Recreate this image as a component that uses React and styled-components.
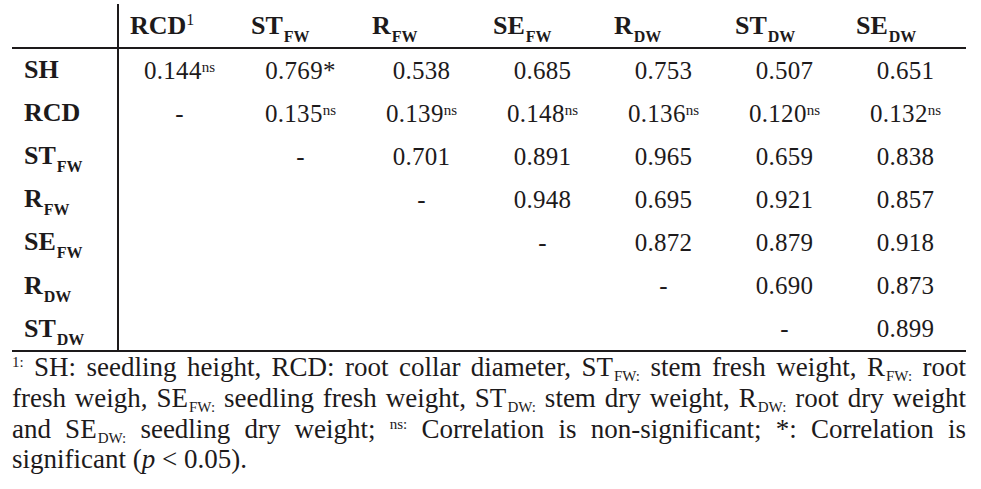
import styled, { createGlobalStyle } from 'styled-components';

const serif = '"Liberation Serif", "Times New Roman", serif';
const ink = '#1d1a1b';

const GlobalStyle = createGlobalStyle`
    body {
        margin: 0;
        background: #fff;
        color: ${ink};
        font-family: ${serif};
    }
`;

const Page = styled.div`
    width: 954px;
    padding: 4px 15px 0 12px;
    font-family: ${serif};
`;

const Grid = styled.div`
    display: grid;
    grid-template-columns: 107px repeat(7, 121px);
    border-bottom: 2.5px solid ${ink};
`;

const HeadCell = styled.div`
    height: 44.5px;
    display: flex;
    align-items: flex-end;
    padding: 0 0 8px 11px;
    box-sizing: border-box;
    font-family: ${serif};
    font-weight: 700;
    font-size: 26px;
    line-height: 26px;
    border-bottom: 2.5px solid ${ink};
    border-right: ${props => props.first ? `2.5px solid ${ink}` : 'none'};
`;

const LabelCell = styled.div`
    height: 43.1px;
    display: flex;
    align-items: center;
    padding-left: 12px;
    font-family: ${serif};
    font-weight: 700;
    font-size: 26px;
    line-height: 26px;
    border-right: 2.5px solid ${ink};
`;

const ValueCell = styled.div`
    height: 43.1px;
    display: flex;
    align-items: center;
    justify-content: center;
    font-family: ${serif};
    font-size: 25px;
    letter-spacing: 0.3px;
    line-height: 26px;
    padding-top: 1px;
    box-sizing: border-box;
`;

const Sub = styled.span`
    font-size: ${props => props.size || '16px'};
    font-weight: inherit;
    letter-spacing: 0;
    position: relative;
    top: ${props => props.drop || '8px'};
    line-height: 0;
    margin-left: 1px;
`;

const Sup = styled.span`
    font-size: ${props => props.size || '15px'};
    font-weight: 400;
    letter-spacing: 0;
    position: relative;
    top: ${props => props.rise || '-7px'};
    line-height: 0;
`;

const Note = styled.div`
    font-family: ${serif};
    font-size: 27px;
    line-height: 30.7px;
`;

const NoteLine = styled.div`
    text-align: ${props => props.last ? 'left' : 'justify'};
    text-align-last: ${props => props.last ? 'left' : 'justify'};
    white-space: nowrap;
`;

const Label = ({ main, sub }) => (
    <>
        {main}
        {sub && <Sub>{sub}</Sub>}
    </>
);

const headers = [
    { main: 'RCD', sup: '1' },
    { main: 'ST', sub: 'FW' },
    { main: 'R', sub: 'FW' },
    { main: 'SE', sub: 'FW' },
    { main: 'R', sub: 'DW' },
    { main: 'ST', sub: 'DW' },
    { main: 'SE', sub: 'DW' }
];

const rows = [
    { main: 'SH', values: ['0.144ns', '0.769*', '0.538', '0.685', '0.753', '0.507', '0.651'] },
    { main: 'RCD', values: ['-', '0.135ns', '0.139ns', '0.148ns', '0.136ns', '0.120ns', '0.132ns'] },
    { main: 'ST', sub: 'FW', values: ['', '-', '0.701', '0.891', '0.965', '0.659', '0.838'] },
    { main: 'R', sub: 'FW', values: ['', '', '-', '0.948', '0.695', '0.921', '0.857'] },
    { main: 'SE', sub: 'FW', values: ['', '', '', '-', '0.872', '0.879', '0.918'] },
    { main: 'R', sub: 'DW', values: ['', '', '', '', '-', '0.690', '0.873'] },
    { main: 'ST', sub: 'DW', values: ['', '', '', '', '', '-', '0.899'] }
];

const Value = ({ text }) => {
    if (text.endsWith('ns')) {
        return <>{text.slice(0, -2)}<Sup>ns</Sup></>;
    }
    return text;
};

// footnote sub/superscripts carry their colon, as in the source
const NSub = ({ children }) => <Sub size="15px" drop="5px">{children}</Sub>;
const NSup = ({ children }) => <Sup size="15px" rise="-9px">{children}</Sup>;

const App = () => {
    return (
        <Page>
            <GlobalStyle />
            <Grid>
                <HeadCell first />
                {headers.map((h, i) => (
                    <HeadCell key={i}>
                        <span>
                            <Label main={h.main} sub={h.sub} />
                            {h.sup && <Sup size="16px" rise="-9px">{h.sup}</Sup>}
                        </span>
                    </HeadCell>
                ))}
                {rows.map((r, i) => [
                    <LabelCell key={'l' + i}>
                        <span><Label main={r.main} sub={r.sub} /></span>
                    </LabelCell>,
                    ...r.values.map((v, j) => (
                        <ValueCell key={i + '-' + j}>
                            <span><Value text={v} /></span>
                        </ValueCell>
                    ))
                ])}
            </Grid>
            <Note>
                <NoteLine>
                    <NSup>1:</NSup> SH: seedling height, RCD: root collar diameter, ST<NSub>FW:</NSub> stem fresh weight, R<NSub>FW:</NSub> root
                </NoteLine>
                <NoteLine>
                    fresh weigh, SE<NSub>FW:</NSub> seedling fresh weight, ST<NSub>DW:</NSub> stem dry weight, R<NSub>DW:</NSub> root dry weight
                </NoteLine>
                <NoteLine>
                    and SE<NSub>DW:</NSub> seedling dry weight; <NSup>ns:</NSup> Correlation is non-significant; *: Correlation is
                </NoteLine>
                <NoteLine last>
                    significant (<i>p</i> &lt; 0.05).
                </NoteLine>
            </Note>
        </Page>
    );
};

export default App;
